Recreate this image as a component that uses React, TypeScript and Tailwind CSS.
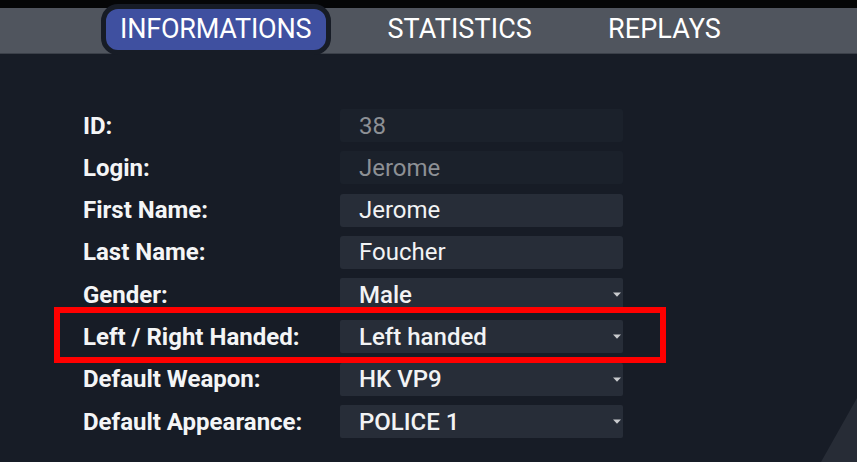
import React from "react";

type Row = { label: string; value: string; kind: "ro" | "edit" | "select" };

const rows: Row[] = [
  { label: "ID:", value: "38", kind: "ro" },
  { label: "Login:", value: "Jerome", kind: "ro" },
  { label: "First Name:", value: "Jerome", kind: "edit" },
  { label: "Last Name:", value: "Foucher", kind: "edit" },
  { label: "Gender:", value: "Male", kind: "select" },
  { label: "Left / Right Handed:", value: "Left handed", kind: "select" },
  { label: "Default Weapon:", value: "HK VP9", kind: "select" },
  { label: "Default Appearance:", value: "POLICE 1", kind: "select" },
];

function Arrow() {
  return (
    <svg width="8" height="5" viewBox="0 0 8 5" className="mr-[2px] shrink-0">
      <path d="M0 0.5 H8 L4 4.8 Z" fill="#c9cbce" />
    </svg>
  );
}

export default function App() {
  return (
    <div
      className="relative w-[857px] h-[462px] overflow-hidden bg-[#171c26]"
      style={{ fontFamily: "Roboto, 'Noto Sans', sans-serif" }}
    >
      {/* header */}
      <div className="h-[8px] bg-[#050607]" />
      <div className="h-[45px] bg-[#50555e] flex items-start pl-[101px]">
        <div className="flex items-start gap-[37px] -mt-[4px] relative z-10">
          <div className="h-[51px] rounded-[17px] border-[5px] border-[#171c26] bg-[#3f50a0] flex items-center pl-[14px] pr-[15px] text-[27px] text-white leading-none tracking-[-0.2px]">
            INFORMATIONS
          </div>
          <div className="h-[51px] border-[5px] border-transparent flex items-center pl-[14px] pr-[15px] text-[27px] text-white leading-none tracking-[0.1px]">
            STATISTICS
          </div>
          <div className="h-[51px] border-[5px] border-transparent flex items-center pl-[14px] pr-[15px] text-[27px] text-white leading-none tracking-[0.1px]">
            REPLAYS
          </div>
        </div>
      </div>
      <div className="h-[1px] bg-[#3b4049]" />

      {/* form */}
      <div className="mt-[55px] pl-[83px] flex flex-col gap-[9.3px]">
        {rows.map((r) => (
          <div key={r.label} className="flex items-center h-[33px]">
            <div className="w-[257px] text-[24px] font-bold text-[#f4f5f6] leading-none">
              {r.label}
            </div>
            <div
              className={
                r.kind === "ro"
                  ? "w-[283px] h-[33px] rounded-[3px] bg-[#1b212b] flex items-center pl-[19px] text-[24px] text-[#8d9095] leading-none"
                  : r.kind === "edit"
                  ? "w-[283px] h-[33px] rounded-[3px] bg-[#272d38] flex items-center pl-[19px] text-[24px] text-[#f2f3f4] leading-none"
                  : "w-[283px] h-[33px] rounded-[2px] bg-[#272d38] flex items-center justify-between pl-[19px] text-[24px] font-medium text-[#f2f3f4] leading-none"
              }
            >
              <span>{r.value}</span>
              {r.kind === "select" && <Arrow />}
            </div>
          </div>
        ))}
      </div>

      {/* highlight annotation */}
      <div className="absolute left-[54px] top-[307px] w-[612px] h-[56px] border-[6px] border-[#ff0000]" />

      {/* corner decoration */}
      <svg className="absolute right-0 bottom-0" width="40" height="66" viewBox="0 0 40 66">
        <polygon points="40,2 4,66 40,66" fill="#272c36" />
      </svg>
    </div>
  );
}
